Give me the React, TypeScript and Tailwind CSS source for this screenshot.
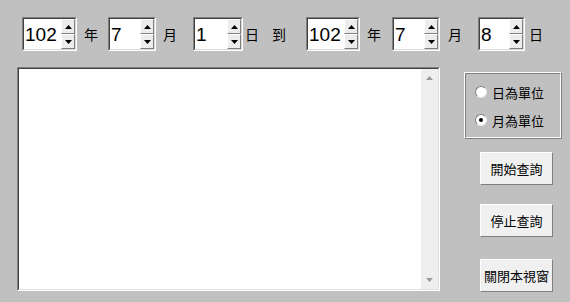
import React from 'react';

const cjk = { fontFamily: '"Noto Sans CJK TC", "Noto Sans CJK SC", sans-serif' };
const num = { fontFamily: '"Liberation Sans", Arial, sans-serif' };

const Arrow: React.FC<{ up?: boolean }> = ({ up }) => (
  <div className="flex-1 flex items-center justify-center bg-[#ececec] border-t border-l border-t-white border-l-white border-b border-r border-b-[#808080] border-r-[#808080]">
    <svg width="7" height="4" viewBox="0 0 7 4">
      {up ? <path d="M3.5 0 L7 4 L0 4 Z" fill="#000" /> : <path d="M0 0 L7 0 L3.5 4 Z" fill="#000" />}
    </svg>
  </div>
);

const Spinner: React.FC<{ value: string; width: string; ml: string }> = ({ value, width, ml }) => (
  <div className={`${width} ${ml} h-[34px] border border-t-[#808080] border-l-[#808080] border-b-white border-r-white`}>
    <div className="h-full flex bg-white border border-t-[#404040] border-l-[#404040] border-b-[#d8d8d8] border-r-[#d8d8d8]">
      <div className="flex-1 flex items-center pl-[1px] text-[19px] text-black leading-none" style={num}>
        {value}
      </div>
      <div className="w-[14px] flex flex-col">
        <Arrow up />
        <Arrow />
      </div>
    </div>
  </div>
);

const Label: React.FC<{ text: string; ml: string }> = ({ text, ml }) => (
  <span className={`${ml} text-[14px] leading-none text-black`} style={cjk}>
    {text}
  </span>
);

const Radio: React.FC<{ checked?: boolean; text: string }> = ({ checked, text }) => (
  <div className="flex items-center h-[18px]">
    <div className="ml-[9px] w-[12px] h-[12px] rounded-full bg-white border border-t-[#808080] border-l-[#808080] border-b-[#e8e8e8] border-r-[#e8e8e8] flex items-center justify-center">
      {checked && <div className="w-[4px] h-[4px] rounded-full bg-black" />}
    </div>
    <span className="ml-[5px] text-[13px] leading-none text-black" style={cjk}>
      {text}
    </span>
  </div>
);

const Button: React.FC<{ text: string; mt: string }> = ({ text, mt }) => (
  <button
    className={`${mt} ml-[16px] w-[73px] h-[33px] flex items-center justify-center bg-[#f0f0f0] border border-t-white border-l-white border-b-[#808080] border-r-[#808080] text-[13px] text-black`}
    style={cjk}
  >
    {text}
  </button>
);

export default function App() {
  return (
    <div className="w-[570px] h-[302px] bg-[#c0c0c0] pt-[17px] overflow-hidden">
      {/* date range row */}
      <div className="flex items-center h-[34px]">
        <Spinner value="102" width="w-[55px]" ml="ml-[22px]" />
        <Label text="年" ml="ml-[7px]" />
        <Spinner value="7" width="w-[48px]" ml="ml-[10px]" />
        <Label text="月" ml="ml-[7px]" />
        <Spinner value="1" width="w-[50px]" ml="ml-[16px]" />
        <Label text="日" ml="ml-[2px]" />
        <Label text="到" ml="ml-[13px]" />
        <Spinner value="102" width="w-[54px]" ml="ml-[20px]" />
        <Label text="年" ml="ml-[7px]" />
        <Spinner value="7" width="w-[48px]" ml="ml-[11px]" />
        <Label text="月" ml="ml-[8px]" />
        <Spinner value="8" width="w-[47px]" ml="ml-[16px]" />
        <Label text="日" ml="ml-[4px]" />
      </div>

      <div className="flex mt-[16px]">
        {/* result list */}
        <div className="ml-[17px] w-[423px] h-[224px] border border-t-[#808080] border-l-[#808080] border-b-white border-r-white">
          <div className="h-full flex bg-white border border-t-[#404040] border-l-[#404040] border-b-[#e0e0e0] border-r-[#e0e0e0]">
            <div className="flex-1" />
            <div className="w-[17px] bg-[#efefef] flex flex-col justify-between items-center py-[7px]">
              <svg width="7" height="4" viewBox="0 0 7 4">
                <path d="M3.5 0 L7 4 L0 4 Z" fill="#9a9a9a" />
              </svg>
              <svg width="7" height="4" viewBox="0 0 7 4">
                <path d="M0 0 L7 0 L3.5 4 Z" fill="#9a9a9a" />
              </svg>
            </div>
          </div>
        </div>

        {/* options */}
        <div className="ml-[24px] w-[98px] flex flex-col">
          <div className="mt-[5px] h-[67px] border border-t-[#ffffff] border-l-[#ffffff] border-b-[#808080] border-r-[#808080]">
            <div className="h-full border border-t-[#808080] border-l-[#808080] border-b-white border-r-white pt-[9px] flex flex-col gap-[10px]">
              <Radio text="日為單位" />
              <Radio checked text="月為單位" />
            </div>
          </div>
          <Button text="開始查詢" mt="mt-[13px]" />
          <Button text="停止查詢" mt="mt-[19px]" />
          <Button text="關閉本視窗" mt="mt-[22px]" />
        </div>
      </div>
    </div>
  );
}
